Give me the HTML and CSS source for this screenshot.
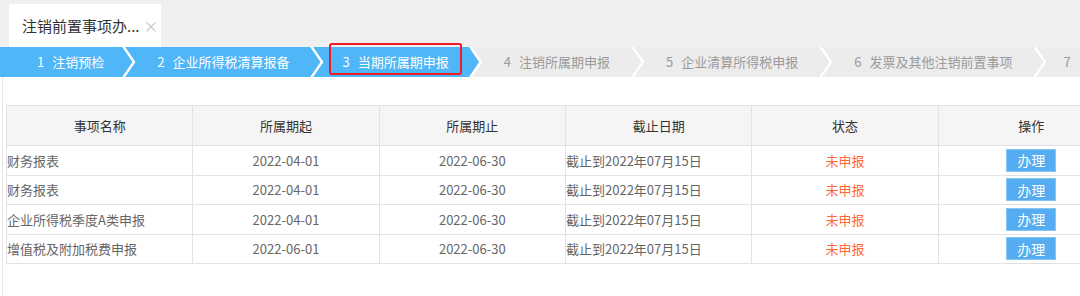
FILE: index.html
```html
<!DOCTYPE html>
<html>
  <head>
    <meta charset="utf-8">
    <link rel="stylesheet" href="styles.css">
  </head>
  <body>
    <div class="tabs">
      <div class="tab">注销前置事项办...<span class="close">&times;</span></div>
    </div>
    <div class="steps">
      <div class="step done first"><span class="num">1</span>注销预检</div>
      <svg class="sep" width="14" height="30" viewBox="0 0 14 30"><rect width="14" height="30" fill="#4fb6f8"/><polyline points="1,-1 12,15 1,31" fill="none" stroke="#fff" stroke-width="2.4"/></svg>
      <div class="step done"><span class="num">2</span>企业所得税清算报备</div>
      <svg class="sep" width="14" height="30" viewBox="0 0 14 30"><rect width="14" height="30" fill="#4fb6f8"/><polyline points="1,-1 12,15 1,31" fill="none" stroke="#fff" stroke-width="2.4"/></svg>
      <div class="step done current"><span class="num">3</span>当期所属期申报<div class="mark"></div></div>
      <svg class="sep" width="14" height="30" viewBox="0 0 14 30"><rect width="14" height="30" fill="#ececec"/><polygon points="0,0 10,15 0,30" fill="#4fb6f8"/><polyline points="1,-1 12,15 1,31" fill="none" stroke="#fff" stroke-width="2.4"/></svg>
      <div class="step"><span class="num">4</span>注销所属期申报</div>
      <svg class="sep" width="14" height="30" viewBox="0 0 14 30"><rect width="14" height="30" fill="#ececec"/><polyline points="1,-1 12,15 1,31" fill="none" stroke="#fff" stroke-width="2.4"/></svg>
      <div class="step"><span class="num">5</span>企业清算所得税申报</div>
      <svg class="sep" width="14" height="30" viewBox="0 0 14 30"><rect width="14" height="30" fill="#ececec"/><polyline points="1,-1 12,15 1,31" fill="none" stroke="#fff" stroke-width="2.4"/></svg>
      <div class="step"><span class="num">6</span>发票及其他注销前置事项</div>
      <svg class="sep" width="14" height="30" viewBox="0 0 14 30"><rect width="14" height="30" fill="#ececec"/><polyline points="1,-1 12,15 1,31" fill="none" stroke="#fff" stroke-width="2.4"/></svg>
      <div class="step last"><span class="num">7</span></div>
    </div>
    <div class="panel">
      <table class="grid">
        <tr>
          <th>事项名称</th>
          <th>所属期起</th>
          <th>所属期止</th>
          <th>截止日期</th>
          <th>状态</th>
          <th>操作</th>
        </tr>
        <tr>
          <td class="left">财务报表</td>
          <td>2022-04-01</td>
          <td>2022-06-30</td>
          <td class="left">截止到2022年07月15日</td>
          <td class="status">未申报</td>
          <td><button class="btn">办理</button></td>
        </tr>
        <tr>
          <td class="left">财务报表</td>
          <td>2022-04-01</td>
          <td>2022-06-30</td>
          <td class="left">截止到2022年07月15日</td>
          <td class="status">未申报</td>
          <td><button class="btn">办理</button></td>
        </tr>
        <tr>
          <td class="left">企业所得税季度A类申报</td>
          <td>2022-04-01</td>
          <td>2022-06-30</td>
          <td class="left">截止到2022年07月15日</td>
          <td class="status">未申报</td>
          <td><button class="btn">办理</button></td>
        </tr>
        <tr>
          <td class="left">增值税及附加税费申报</td>
          <td>2022-06-01</td>
          <td>2022-06-30</td>
          <td class="left">截止到2022年07月15日</td>
          <td class="status">未申报</td>
          <td><button class="btn">办理</button></td>
        </tr>
      </table>
    </div>
  </body>
</html>
```

FILE: styles.css
```css
body {
  margin: 0;
  width: 1080px;
  height: 296px;
  overflow: hidden;
  background: white;
  font-family: "Noto Sans CJK SC", "Noto Sans", sans-serif;
  font-size: 13px;
  color: #666;
}

.tabs {
  height: 43px;
  padding: 4px 0 0 9px;
  background: #f0f0f0;
  display: flex;
}

.tab {
  width: 152px;
  height: 43px;
  background: white;
  box-sizing: border-box;
  padding-left: 13px;
  display: flex;
  align-items: center;
  font-size: 15px;
  color: #333;
  white-space: nowrap;
}

.close {
  color: #c4c4c4;
  font-size: 15px;
  margin-left: 4px;
}

.steps {
  height: 30px;
  display: flex;
  background: #ececec;
  white-space: nowrap;
}

.step {
  position: relative;
  height: 30px;
  line-height: 30px;
  padding: 0 21px;
  color: #9a9a9a;
  background: #ececec;
  flex: none;
}

.step.done {
  background: #4fb6f8;
  color: white;
}

.step.first {
  padding-left: 37px;
  padding-right: 18px;
}

.step.current {
  padding: 0 20px 0 18px;
}

.step.last {
  padding-left: 16px;
}

.num {
  margin-right: 8px;
}

.sep {
  display: block;
  flex: none;
}

.mark {
  position: absolute;
  left: 5px;
  top: -4px;
  width: 133px;
  height: 32px;
  box-sizing: border-box;
  border: 2px solid #ee1c25;
  border-radius: 3px;
}

.panel {
  margin-left: 2px;
  border-left: 1px solid #e6e6e6;
  padding: 28px 0 0 3px;
  height: 191px;
}

.grid {
  border-collapse: collapse;
  table-layout: fixed;
  width: 1119px;
}

.grid th,
.grid td {
  border: 1px solid #e2e2e2;
  padding: 0;
  text-align: center;
  font-weight: normal;
  white-space: nowrap;
}

.grid th {
  height: 39px;
  background: #f5f5f5;
  color: #333;
}

.grid tr {
  height: 29.5px;
}

.grid tr:first-child {
  height: 40px;
}

.grid td.left {
  text-align: left;
}

.grid td.status {
  color: #ff6a3a;
}

.btn {
  width: 50px;
  height: 23px;
  padding: 0;
  border: 1px solid #86c6f4;
  background: #55acf1;
  color: white;
  font-family: "Noto Sans CJK SC", sans-serif;
  font-size: 14px;
  line-height: 20px;
  vertical-align: middle;
}
```
